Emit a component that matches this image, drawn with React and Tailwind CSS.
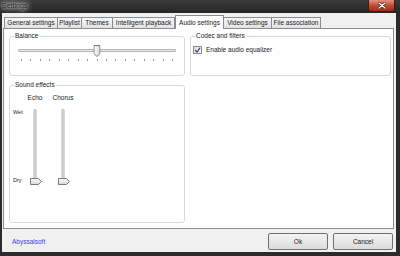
import React from 'react';

const tabs = [
    { label: 'General settings', w: 'w-[54px]' },
    { label: 'Playlist', w: 'w-[25px]' },
    { label: 'Themes', w: 'w-[32px]' },
    { label: 'Intelligent playback', w: 'w-[63px]' },
    { label: 'Audio settings', w: 'w-[49px]', active: true },
    { label: 'Video settings', w: 'w-[49px]' },
    { label: 'File association', w: 'w-[50px]' },
];

function DownThumb() {
    return (
        <svg width="7" height="12" viewBox="0 0 7 12">
            <defs>
                <linearGradient id="tg" x1="0" x2="1" y1="0" y2="0">
                    <stop offset="0" stopColor="#fdfdfd" />
                    <stop offset="1" stopColor="#d6d6d6" />
                </linearGradient>
            </defs>
            <path d="M0.5 0.5 H6.5 V8.5 L3.5 11.5 L0.5 8.5 Z" fill="url(#tg)" stroke="#7a7a7a" />
        </svg>
    );
}

function RightThumb() {
    return (
        <svg width="12" height="7" viewBox="0 0 12 7">
            <defs>
                <linearGradient id="tr" x1="0" x2="0" y1="0" y2="1">
                    <stop offset="0" stopColor="#fdfdfd" />
                    <stop offset="1" stopColor="#d6d6d6" />
                </linearGradient>
            </defs>
            <path d="M0.5 0.5 H8.5 L11.5 3.5 L8.5 6.5 H0.5 Z" fill="url(#tr)" stroke="#7a7a7a" />
        </svg>
    );
}

// group box: label sits on top of the border line
function Group({ title, className, children }) {
    return (
        <div className={`relative shrink-0 border border-[#d3dbe1] rounded-[3px] ${className}`}>
            <span className="absolute -top-[5px] left-[4px] px-[1px] bg-white leading-[8px] whitespace-nowrap">{title}</span>
            {children}
        </div>
    );
}

function VSlider({ label }) {
    return (
        <div className="w-[20px] flex flex-col items-center">
            <div className="h-[8px] leading-[8px] whitespace-nowrap">{label}</div>
            <div className="relative mt-[4px] h-[80px] w-[20px]">
                <div className="absolute left-1/2 -translate-x-1/2 top-[3px] bottom-[4px] w-[3px] border border-[#b4b4b4] bg-[#e8e8e8] rounded-[1px]" />
                <div className="absolute left-[5px] top-[72px] leading-none">
                    <RightThumb />
                </div>
            </div>
        </div>
    );
}

export default function App() {
    return (
        <div className="w-[400px] h-[256px] bg-[#2b2b2b] flex flex-col text-[6.5px] text-[#1a1a1a] font-['Liberation_Sans',Arial,sans-serif]">
            {/* Title bar */}
            <div className="h-[13px] shrink-0 flex items-center justify-between bg-gradient-to-b from-[#3c3c3c] to-[#262626]">
                <span className="ml-[2px] text-[7px] text-[#1c1c1c] [text-shadow:0_0_3px_#fff,0_0_6px_#fff,0_0_9px_#ddd]">Settings</span>
                <div className="mr-[5px] self-start w-[27px] h-[12px] rounded-b-[3px] border border-t-0 border-[#4a1a12] bg-gradient-to-b from-[#e4917e] via-[#c24a35] to-[#a52a17] flex items-center justify-center">
                    <svg width="8" height="7" viewBox="0 0 8 7">
                        <path d="M1 1 L7 6 M7 1 L1 6" stroke="#3a1a14" strokeWidth="2.6" strokeLinecap="round" />
                        <path d="M1 1 L7 6 M7 1 L1 6" stroke="#ffffff" strokeWidth="1.4" strokeLinecap="round" />
                    </svg>
                </div>
            </div>

            {/* Window body */}
            <div className="ml-[2px] mr-[4px] flex-1 bg-[#f0f0f0] flex flex-col pl-[1px] pr-[2px]">
                {/* Tabs */}
                <div className="h-[15px] shrink-0 flex items-end pl-[1px]">
                    {tabs.map((t) =>
                        t.active ? (
                            <div
                                key={t.label}
                                className={`${t.w} h-[14px] -mb-px relative z-10 bg-white border border-b-0 border-[#898c95] flex items-center justify-center whitespace-nowrap`}
                            >
                                {t.label}
                            </div>
                        ) : (
                            <div
                                key={t.label}
                                className={`${t.w} h-[11px] -ml-px first:ml-0 bg-gradient-to-b from-[#f7f7f7] to-[#e2e2e2] border border-b-0 border-[#898c95] flex items-center justify-center whitespace-nowrap`}
                            >
                                {t.label}
                            </div>
                        )
                    )}
                </div>

                {/* Tab panel */}
                <div className="h-[201px] shrink-0 bg-white border border-[#898c95] pt-[7px] pl-[5px] flex gap-x-[5px]">
                    <div className="w-[176px] flex flex-col pb-[5px]">
                        <Group title="Balance" className="h-[40px] px-[8px] pt-[6px]">
                            <div className="relative h-[14px]">
                                <div className="absolute left-0 right-0 top-[6px] h-[3px] border border-[#b4b4b4] bg-[#e8e8e8] rounded-[1px]" />
                                <div className="absolute left-1/2 -translate-x-1/2 top-[2px] leading-none">
                                    <DownThumb />
                                </div>
                            </div>
                            <div className="mt-[2px] h-[2px] px-[3px] flex justify-between">
                                {Array.from({ length: 17 }).map((_, i) => (
                                    <div key={i} className="w-px h-[2px] bg-[#9a9a9a]" />
                                ))}
                            </div>
                        </Group>

                        <Group title="Sound effects" className="mt-[9px] flex-1 pl-[3px] pt-[8px]">
                            <div className="flex gap-[8px]">
                                <div className="flex">
                                    <div className="w-[12px] mt-[12px] h-[80px] pt-[2px] pb-[2px] flex flex-col justify-between text-[5.5px] leading-[8px]">
                                        <span>Wet</span>
                                        <span>Dry</span>
                                    </div>
                                    <VSlider label="Echo" />
                                </div>
                                <VSlider label="Chorus" />
                            </div>
                        </Group>
                    </div>

                    <Group title="Codec and filters" className="w-[201px] h-[40px] px-[2px] pt-[9px] self-start">
                        <div className="flex items-center gap-[4px]">
                            <div className="w-[9px] h-[8px] border border-[#8f8f8f] bg-gradient-to-br from-[#dcdcdc] to-[#f8f8f8] flex items-center justify-center">
                                <svg width="7" height="6" viewBox="0 0 7 6">
                                    <path d="M1 3 L3 5 L6 0.8" fill="none" stroke="#3b4a6b" strokeWidth="1.2" />
                                </svg>
                            </div>
                            <span className="leading-[8px]">Enable audio equalizer</span>
                        </div>
                    </Group>
                </div>

                {/* Bottom strip */}
                <div className="flex-1 flex items-start justify-between pl-[9px] pr-[1px]">
                    <span className="mt-[9px] leading-[8px] text-[#3c3cf2]">Abyssalsoft</span>
                    <div className="mt-[4px] flex gap-[5px]">
                        <button className="w-[60px] h-[17px] rounded-[2px] border border-[#707070] bg-gradient-to-b from-[#f3f3f3] to-[#dcdcdc] text-[6.5px]">
                            Ok
                        </button>
                        <button className="w-[60px] h-[17px] rounded-[2px] border border-[#707070] bg-gradient-to-b from-[#f3f3f3] to-[#dcdcdc] text-[6.5px]">
                            Cancel
                        </button>
                    </div>
                </div>
            </div>
            <div className="h-[4px] shrink-0" />
        </div>
    );
}
